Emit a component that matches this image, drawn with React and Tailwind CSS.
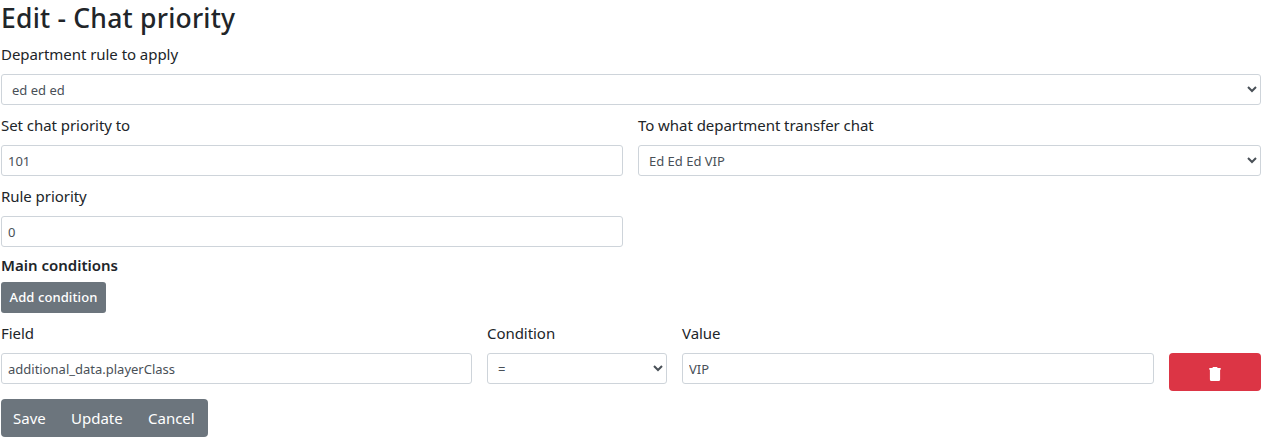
const control =
  "block h-[31px] w-full rounded-[3px] border border-[#ced4da] bg-white text-[13px] text-[#495057] outline-none";

function Label({ children }) {
  return <label className="mb-2 block h-6 text-[15px] leading-6 tracking-[-0.05px] whitespace-nowrap">{children}</label>;
}

function TextField({ label, value }) {
  return (
    <div className="min-w-0">
      <Label>{label}</Label>
      <input className={`${control} px-1.5`} type="text" defaultValue={value} />
    </div>
  );
}

function SelectField({ label, value }) {
  return (
    <div className="min-w-0">
      <Label>{label}</Label>
      <select className={`${control} pr-px pl-1.5`} defaultValue={value}>
        <option>{value}</option>
      </select>
    </div>
  );
}

function TrashIcon() {
  return (
    <svg className="mt-1 h-[14px] w-3" viewBox="0 0 12 14" fill="#fff">
      <path d="M0.3 1h3l0.7-0.9h4l0.7 0.9h3v1.7h-0.6v9.8a1.5 1.5 0 0 1-1.5 1.5h-7.2a1.5 1.5 0 0 1-1.5-1.5v-9.8h-0.6z" />
    </svg>
  );
}

export default function App() {
  return (
    <main className="h-[440px] w-[1261px] overflow-hidden bg-white pl-px font-['Noto_Sans',sans-serif] text-[#212529]">
      <h1 className="h-[42px] pt-px text-[26.5px] leading-[34px] font-medium tracking-[0.22px]">Edit - Chat priority</h1>
      <SelectField label="Department rule to apply" value="ed ed ed" />
      <div className="mt-2 grid grid-cols-[622px_623px] gap-x-[15px] gap-y-2">
        <TextField label="Set chat priority to" value="101" />
        <SelectField label="To what department transfer chat" value="Ed Ed Ed VIP" />
        <TextField label="Rule priority" value="0" />
      </div>
      <h2 className="mt-[7px] h-7 text-[15px] leading-[22px] font-semibold">Main conditions</h2>
      <button className="block h-[31px] w-[105px] rounded-[3px] bg-[#6c757d] pt-px text-[13px] font-medium tracking-[0.1px] whitespace-nowrap text-white">
        Add condition
      </button>
      <div className="mt-2 grid grid-cols-[471px_180px_472px_92px] gap-x-[15px]">
        <TextField label="Field" value="additional_data.playerClass" />
        <SelectField label="Condition" value="=" />
        <TextField label="Value" value="VIP" />
        <button
          aria-label="Delete condition"
          className="mt-8 flex h-[38px] items-center justify-center rounded bg-[#dc3545]"
        >
          <TrashIcon />
        </button>
      </div>
      <div className="mt-2 flex h-[38px] w-[207px] items-center overflow-hidden rounded bg-[#6c757d] text-[15px] text-white">
        <button className="w-[58px] pl-3 text-left">Save</button>
        <button className="w-[77px] pl-3 text-left">Update</button>
        <button className="w-[72px] pl-3 text-left">Cancel</button>
      </div>
    </main>
  );
}
